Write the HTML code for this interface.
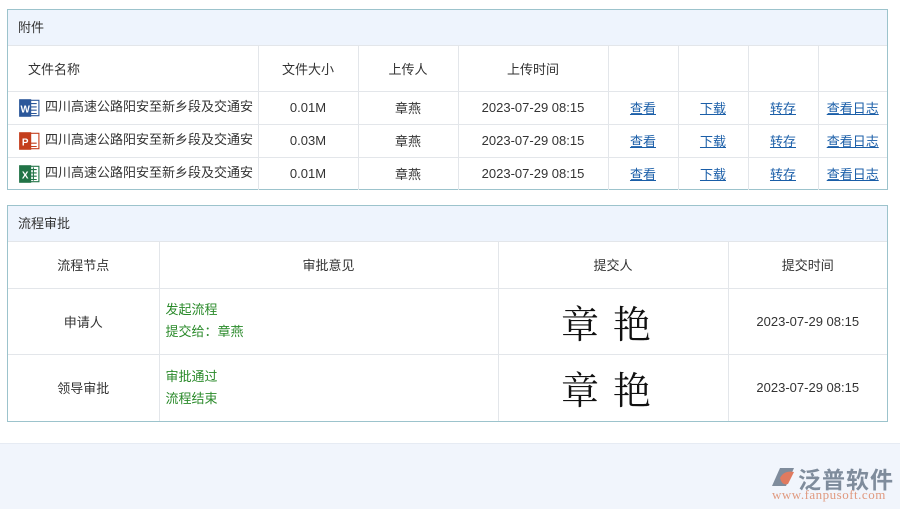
<!DOCTYPE html><html><head><meta charset="utf-8"><style>
*{margin:0;padding:0;box-sizing:border-box}
body{width:900px;height:509px;background:#fff;font-family:"Liberation Sans","Noto Sans CJK SC",sans-serif;font-size:13px;color:#333;position:relative;overflow:hidden}
.p{position:absolute;left:7px;width:881px;border:1px solid #9cc3cc;background:#fff}
.h{background:#eef4fd;height:36px;line-height:35px;padding-left:10px;border-bottom:1px solid #e3e6ea}
table{border-collapse:collapse;width:100%;table-layout:fixed}
td{border-right:1px solid #e3e6ea;border-bottom:1px solid #e3e6ea;text-align:center;vertical-align:middle}
td:last-child{border-right:none}
tr:last-child td{border-bottom:none}
a{color:#1a5ea8;text-decoration:underline}
.ic{display:inline-block;width:22px;height:22px;vertical-align:middle;margin-right:5px;position:relative}
.sig{font-family:"Noto Serif CJK SC",serif;font-size:38px;font-weight:normal;letter-spacing:14px;color:#111}
.g{color:#2a8a2a;text-align:left;padding-left:6px;line-height:22px}
.ft{position:absolute;left:0;top:443px;width:900px;height:66px;background:#f1f5fc;border-top:1px solid #e6ebf3}
</style></head><body>
<div class="p" style="top:9px;height:181px">
<div class="h">附件</div>
<table>
<colgroup><col style="width:250px"><col style="width:100px"><col style="width:100px"><col style="width:150px"><col style="width:70px"><col style="width:70px"><col style="width:70px"><col></colgroup>
<tr style="height:45px"><td style="text-align:left;padding-left:20px">文件名称</td><td>文件大小</td><td>上传人</td><td>上传时间</td><td></td><td></td><td></td><td></td></tr>
<tr style="height:33px"><td style="text-align:left;padding-left:10px;white-space:nowrap"><svg class="ic" viewBox="0 0 20 20"><rect x="8" y="3" width="11" height="14" fill="#fff" stroke="#2b579a"/><path d="M10 6h7M10 9h7M10 12h7M10 15h7" stroke="#2b579a"/><rect x="1" y="2" width="11" height="16" fill="#2b579a"/><text x="6.5" y="14" font-size="9" fill="#fff" text-anchor="middle" font-weight="bold">W</text></svg>四川高速公路阳安至新乡段及交通安</td><td>0.01M</td><td>章燕</td><td>2023-07-29 08:15</td><td><a>查看</a></td><td><a>下载</a></td><td><a>转存</a></td><td><a>查看日志</a></td></tr>
<tr style="height:33px"><td style="text-align:left;padding-left:10px;white-space:nowrap"><svg class="ic" viewBox="0 0 20 20"><rect x="8" y="3" width="11" height="14" fill="#fff" stroke="#c43e1c"/><path d="M10 12h7M10 15h7" stroke="#c43e1c"/><rect x="1" y="2" width="11" height="16" fill="#c43e1c"/><text x="6.5" y="14" font-size="9" fill="#fff" text-anchor="middle" font-weight="bold">P</text></svg>四川高速公路阳安至新乡段及交通安</td><td>0.03M</td><td>章燕</td><td>2023-07-29 08:15</td><td><a>查看</a></td><td><a>下载</a></td><td><a>转存</a></td><td><a>查看日志</a></td></tr>
<tr style="height:33px"><td style="text-align:left;padding-left:10px;white-space:nowrap"><svg class="ic" viewBox="0 0 20 20"><rect x="8" y="3" width="11" height="14" fill="#fff" stroke="#217346"/><path d="M10 6h7M10 9h7M10 12h7M10 15h7M14 4v12" stroke="#217346"/><rect x="1" y="2" width="11" height="16" fill="#217346"/><text x="6.5" y="14" font-size="9" fill="#fff" text-anchor="middle" font-weight="bold">X</text></svg>四川高速公路阳安至新乡段及交通安</td><td>0.01M</td><td>章燕</td><td>2023-07-29 08:15</td><td><a>查看</a></td><td><a>下载</a></td><td><a>转存</a></td><td><a>查看日志</a></td></tr>
</table></div>
<div class="p" style="top:205px;height:217px">
<div class="h">流程审批</div>
<table>
<colgroup><col style="width:151px"><col style="width:339px"><col style="width:230px"><col></colgroup>
<tr style="height:46px"><td>流程节点</td><td>审批意见</td><td>提交人</td><td>提交时间</td></tr>
<tr style="height:66px"><td>申请人</td><td class="g">发起流程<br>提交给：章燕</td><td><span class="sig">章艳</span></td><td>2023-07-29 08:15</td></tr>
<tr style="height:67px"><td>领导审批</td><td class="g">审批通过<br>流程结束</td><td><span class="sig">章艳</span></td><td>2023-07-29 08:15</td></tr>
</table></div>
<div class="ft">
<svg style="position:absolute;left:770px;top:20px" width="26" height="26" viewBox="0 0 26 26"><path d="M2 22 L10 4 L24 4 L16 22Z" fill="#7f8c9c"/><path d="M10 14 Q14 6 24 8 L18 20 Q12 22 10 14Z" fill="#e07a5f"/></svg>
<div style="position:absolute;left:798px;top:17px;font-size:23px;font-weight:bold;color:#7f8c9c;letter-spacing:1px">泛普软件</div>
<div style="position:absolute;left:772px;top:43px;font-family:'Liberation Serif',serif;font-size:13px;color:#e09a80;letter-spacing:0.5px">www.fanpusoft.com</div>
</div>
</body></html>
